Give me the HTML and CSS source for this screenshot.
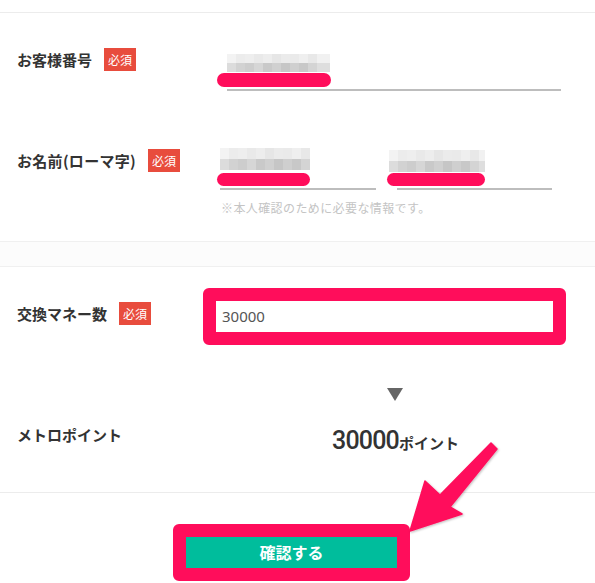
FILE: index.html
```html
<!DOCTYPE html>
<html lang="ja">
<head>
<meta charset="utf-8">
<title>メトロポイント交換</title>
<link rel="stylesheet" href="styles.css">
</head>
<body>
<div class="page">
  <div class="rule rule-top"></div>

  <div class="row row-id">
    <div class="label-col"><span class="label">お客様番号</span><span class="badge">必須</span></div>
    <div class="field-col">
      <div class="field">
        <div class="mosaic mosaic-id"></div>
        <div class="marker marker-id"></div>
        <div class="underline underline-id"></div>
      </div>
    </div>
  </div>

  <div class="row row-name">
    <div class="label-col"><span class="label">お名前(ローマ字)</span><span class="badge">必須</span></div>
    <div class="field-col">
      <div class="name-fields">
        <div class="field field-last">
          <div class="mosaic mosaic-last"></div>
          <div class="marker marker-last"></div>
          <div class="underline underline-last"></div>
        </div>
        <div class="field field-first">
          <div class="mosaic mosaic-first"></div>
          <div class="marker marker-first"></div>
          <div class="underline underline-first"></div>
        </div>
      </div>
      <p class="note">※本人確認のために必要な情報です。</p>
    </div>
  </div>

  <div class="band"></div>

  <div class="row row-amount">
    <div class="label-col"><span class="label">交換マネー数</span><span class="badge">必須</span></div>
    <div class="field-col">
      <div class="highlight-box">
        <div class="amount-input">30000</div>
      </div>
    </div>
  </div>

  <div class="row row-result">
    <div class="label-col result-label"><span class="label">メトロポイント</span></div>
    <div class="result-col">
      <div class="down-triangle"></div>
      <div class="result-value"><span class="num">30000</span><span class="unit">ポイント</span></div>
    </div>
  </div>

  <div class="rule rule-bottom"></div>

  <div class="actions">
    <div class="button-highlight">
      <button class="confirm" type="button">確認する</button>
    </div>
  </div>

  <svg class="arrow" width="595" height="583" viewBox="0 0 595 583" aria-hidden="true">
    <defs>
      <filter id="sh" x="-20%" y="-20%" width="140%" height="140%">
        <feDropShadow dx="1" dy="1" stdDeviation="1.2" flood-color="#000" flood-opacity="0.25"/>
      </filter>
    </defs>
    <polygon filter="url(#sh)" fill="#ff0d5b" stroke="#ff0d5b" stroke-width="1.5" stroke-linejoin="round"
      points="491,443 440,495 425,481 410,531 462,514 450,507 497,449"/>
  </svg>
</div>
</body>
</html>
```

FILE: styles.css
```css
* { box-sizing: border-box; }

html, body {
  margin: 0;
  padding: 0;
  background: #ffffff;
}

body {
  font-family: "Noto Sans CJK JP", "Noto Sans", sans-serif;
  color: #333333;
  width: 595px;
  height: 583px;
  overflow: hidden;
}

.page {
  position: relative;
  width: 595px;
  height: 583px;
  padding-top: 12px;
}

.rule {
  height: 1px;
  background: #ececec;
}

.row {
  display: flex;
  align-items: flex-start;
}

.label-col {
  width: 203px;
  flex: 0 0 203px;
  padding-left: 17px;
  display: flex;
  align-items: center;
  gap: 12px;
  height: 23px;
}

.label {
  font-size: 15px;
  font-weight: 700;
  line-height: 20px;
  color: #333333;
  white-space: nowrap;
}

.badge {
  display: inline-block;
  width: 32px;
  height: 23px;
  line-height: 23px;
  text-align: center;
  background: #e84c3d;
  color: #ffffff;
  font-size: 12px;
  font-weight: 400;
}

.field-col {
  padding-left: 14px;
}

/* Row 1 */
.row-id { margin-top: 35px; }
.row-id .field-col { margin-top: 6px; }

.mosaic {
  background:
    linear-gradient(90deg, #f3f3f3 0 9px, #ececec 9px 18px, #eeeeee 18px 27px, #e9e9e9 27px 36px, #ededed 36px 45px, #e6e6e6 45px 54px, #ebebeb 54px 63px, #eaeaea 63px 72px, #efefef 72px 81px, #e8e8e8 81px 90px, #f1f1f1 90px 100%) top left / 100% 50% no-repeat,
    linear-gradient(90deg, #dcdcdc 0 9px, #d2d2d2 9px 18px, #cdcdcd 18px 27px, #d6d6d6 27px 36px, #c9c9c9 36px 45px, #d0d0d0 45px 54px, #c6c6c6 54px 63px, #cfcfcf 63px 72px, #c8c8c8 72px 81px, #d4d4d4 81px 90px, #dedede 90px 100%) bottom left / 100% 50% no-repeat;
}

.mosaic-id { width: 103px; height: 18px; margin-left: 10px; }

.marker {
  background: #ff0d5b;
  border-radius: 7px;
}

.marker-id { width: 114px; height: 14px; margin-top: 1px; }

.underline {
  height: 2px;
  background: #bdbdbd;
  margin-top: 2px;
}

.underline-id { width: 334px; margin-left: 10px; }

/* Row 2 */
.row-name { margin-top: 57px; }
.row-name .label-col { margin-top: 1px; }
.row-name .label { letter-spacing: 0.3px; }

.name-fields {
  display: flex;
  gap: 11px;
  align-items: flex-start;
}

.field-last { width: 159px; }
.field-first { width: 165px; }

.mosaic-last { width: 90px; height: 22px; margin-left: 3px; margin-bottom: 3px; }
.mosaic-first { width: 96px; height: 22px; margin-left: 2px; margin-top: 2px; margin-bottom: 1px; }

.marker-last { width: 93px; height: 13px; }
.marker-first { width: 98px; height: 13px; }

.underline-last { width: 156px; margin-left: 3px; }
.underline-first { width: 155px; margin-left: 10px; }

.note {
  margin: 10px 0 0 4px;
  font-size: 12px;
  line-height: 16px;
  color: #c4c4c4;
  letter-spacing: 0.4px;
}

/* Band */
.band {
  margin-top: 25px;
  height: 26px;
  border-top: 1px solid #f0f0f0;
  border-bottom: 1px solid #f0f0f0;
  background: #fcfcfc;
}

/* Row 3 */
.row-amount { margin-top: 21px; }
.row-amount .label-col { margin-top: 14px; }
.row-amount .field-col { padding-left: 0; }

.highlight-box {
  width: 363px;
  height: 57px;
  border: 13px solid #ff0d5b;
  border-radius: 6px;
  background: #ffffff;
}

.amount-input {
  height: 31px;
  line-height: 31px;
  padding-left: 6px;
  font-family: "Noto Sans", "Open Sans", sans-serif;
  font-size: 15px;
  color: #555555;
}

/* Result */
.row-result { margin-top: 43px; }
.result-label { margin-top: 35px; }

.result-col {
  width: 383px;
  display: flex;
  flex-direction: column;
  align-items: center;
}

.down-triangle {
  width: 0;
  height: 0;
  border-left: 8px solid transparent;
  border-right: 8px solid transparent;
  border-top: 13px solid #666666;
}

.result-value {
  margin-top: 26px;
  margin-left: 2px;
  height: 28px;
  line-height: 28px;
  white-space: nowrap;
  color: #333333;
}

.num {
  font-family: Roboto, "Liberation Sans", sans-serif;
  font-size: 25px;
  font-weight: 500;
  letter-spacing: -0.8px;
}

.unit {
  font-size: 15px;
  font-weight: 700;
}

.rule-bottom { margin-top: 37px; }

/* Button */
.actions {
  margin-top: 31px;
  padding-left: 173px;
}

.button-highlight {
  width: 237px;
  height: 57px;
  border: 13px solid #ff0d5b;
  border-radius: 6px;
  background: #ffffff;
}

.confirm {
  display: block;
  width: 100%;
  height: 31px;
  margin: 0;
  padding: 0;
  border: 0;
  background: #00bd9c;
  color: #ffffff;
  font-family: "Noto Sans CJK JP", sans-serif;
  font-size: 16px;
  font-weight: 700;
  line-height: 31px;
  text-align: center;
}

.arrow {
  position: absolute;
  left: 0;
  top: 0;
  pointer-events: none;
}
```
